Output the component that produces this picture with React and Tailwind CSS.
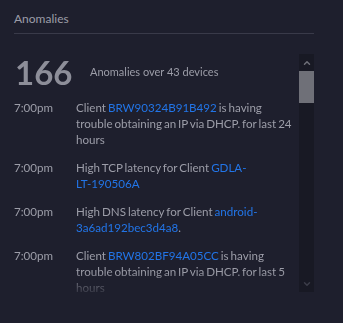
import { ChevronUp, ChevronDown } from 'lucide-react';

const rows = [
  { time: '7:00pm', pre: 'Client ', link: ['BRW90324B91B492'], post: ' is having trouble obtaining an IP via DHCP. for last 24 hours' },
  { time: '7:00pm', pre: 'High TCP latency for Client ', link: ['GDLA-', 'LT-190506A'], post: '' },
  { time: '7:00pm', pre: 'High DNS latency for Client ', link: ['android-', '3a6ad192bec3d4a8'], post: '.' },
  { time: '7:00pm', pre: 'Client ', link: ['BRW802BF94A05CC'], post: ' is having trouble obtaining an IP via DHCP. for last 5 hours' },
  { time: '6:45pm', pre: 'High TCP latency for Client ', link: ['DESKTOP-', '7H2KQ1B'], post: '' },
  { time: '6:30pm', pre: 'Client ', link: ['BRW90324B91B492'], post: ' is having trouble obtaining an IP via DHCP. for last 23 hours' },
];

function AnomalyRow({ row }) {
  return (
    <div className="flex">
      <span className="w-[62px] shrink-0">{row.time}</span>
      <p className="min-w-0 flex-1 [word-spacing:-1px]">
        {row.pre}
        <span className="text-[#2275e8]">
          {row.link.map((part, i) => (
            <span key={i} className="whitespace-nowrap">{part}</span>
          ))}
        </span>
        {row.post}
      </p>
    </div>
  );
}

function FakeScrollbar() {
  return (
    <div className="flex w-[15px] shrink-0 flex-col bg-[#181924]">
      <div className="flex h-[17px] items-center justify-center text-[#6e6f78]">
        <ChevronUp className="h-[10px] w-[10px]" strokeWidth={3.5} />
      </div>
      <div className="h-[32px] bg-[#6f7078]" />
      <div className="flex-1" />
      <div className="flex h-[16px] items-center justify-center text-[#3c3d4a]">
        <ChevronDown className="h-[10px] w-[10px]" strokeWidth={3.5} />
      </div>
    </div>
  );
}

export default function App() {
  return (
    <div className="h-[323px] w-[343px] overflow-hidden bg-[#1e1f2d] pl-[14px] pr-[29px] font-['Lato','Noto_Sans',sans-serif] text-[#9c9da8]">
      <div className="flex h-[34px] items-center border-b border-[#393a49] pt-[4px] text-[12px]">
        Anomalies
      </div>

      <div className="mt-[20px] flex h-[238px]">
        <div className="min-w-0 flex-1 overflow-hidden text-[11.6px] leading-[16px] [mask-image:linear-gradient(to_bottom,black_calc(100%-20px),rgba(0,0,0,0.25)_100%)]">
          <div className="flex h-[36px] items-center">
            <span className="w-[76px] pl-[1px] text-[33px] font-bold leading-none text-[#8d8e99]">166</span>
            <span className="text-[11px]">Anomalies over 43 devices</span>
          </div>
          <div className="mt-[10px] flex flex-col gap-[12px]">
            {rows.map((row, i) => (
              <AnomalyRow key={i} row={row} />
            ))}
          </div>
        </div>
        <FakeScrollbar />
      </div>
    </div>
  );
}
